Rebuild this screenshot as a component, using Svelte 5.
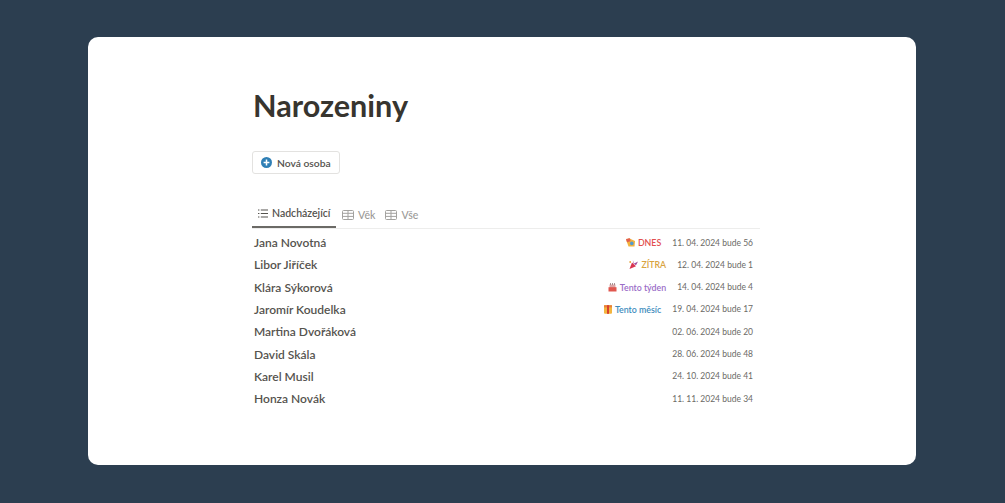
<script>
    const rows = [
        { name: "Jana Novotná", tag: "DNES", tone: "today", icon: "party", date: "11. 04. 2024 bude 56" },
        { name: "Libor Jiříček", tag: "ZÍTRA", tone: "tomorrow", icon: "popper", date: "12. 04. 2024 bude 1" },
        { name: "Klára Sýkorová", tag: "Tento týden", tone: "week", icon: "cake", date: "14. 04. 2024 bude 4" },
        { name: "Jaromír Koudelka", tag: "Tento měsíc", tone: "month", icon: "gift", date: "19. 04. 2024 bude 17" },
        { name: "Martina Dvořáková", date: "02. 06. 2024 bude 20" },
        { name: "David Skála", date: "28. 06. 2024 bude 48" },
        { name: "Karel Musil", date: "24. 10. 2024 bude 41" },
        { name: "Honza Novák", date: "11. 11. 2024 bude 34" }
    ];
</script>

{#snippet tableIcon()}
    <svg width="12" height="10" viewBox="0 0 12 10" fill="none">
        <rect x="0.5" y="0.5" width="11" height="9" rx="1" stroke="#a3a29f" stroke-width="1"/>
        <path d="M0.5 3.3H11.5M6 0.5V9.5M0.5 6.4H11.5" stroke="#a3a29f" stroke-width="1"/>
    </svg>
{/snippet}

<div class="page">
    <main class="card">
        <div class="content">
            <h1>Narozeniny</h1>

            <button class="new">
                <svg width="11" height="11" viewBox="0 0 11 11">
                    <circle cx="5.5" cy="5.5" r="5.5" fill="#2f7fb5"/>
                    <path d="M5.5 2.6V8.4M2.6 5.5H8.4" stroke="#fff" stroke-width="1.5"/>
                </svg>
                Nová osoba
            </button>

            <nav class="tabs">
                <span class="tab active">
                    <svg width="10" height="9" viewBox="0 0 10 9" fill="none" stroke="#55534e" stroke-width="1.1">
                        <path d="M0 1H1.4M2.8 1H10M0 4.5H1.4M2.8 4.5H10M0 8H1.4M2.8 8H10"/>
                    </svg>
                    Nadcházející
                </span>
                <span class="tab">{@render tableIcon()} Věk</span>
                <span class="tab">{@render tableIcon()} Vše</span>
            </nav>

            <ul>
                {#each rows as row}
                    <li>
                        <span class="name">{row.name}</span>
                        {#if row.tag}
                            <span class="tag {row.tone}">
                                {#if row.icon === "party"}
                                    <svg width="9" height="9" viewBox="0 0 9 9">
                                        <path d="M0 1.5L3 0.3L9 3L8.5 8.5H2.5Z" fill="#f2b33d"/>
                                        <path d="M0 1L4 0.3L4.5 3.2L1 4.2Z" fill="#e2604f"/>
                                        <circle cx="5.8" cy="5.4" r="1.8" fill="#4f9bd1"/>
                                    </svg>
                                {:else if row.icon === "popper"}
                                    <svg width="9" height="9" viewBox="0 0 9 9">
                                        <path d="M0.5 9L3 2.5L7 6.2Z" fill="#d9344f"/>
                                        <path d="M3.8 0L5.2 3.5L9 1.5L7 5.2L4.5 3.5Z" fill="#a14a9e"/>
                                        <circle cx="1.2" cy="2" r="0.9" fill="#e7a23b"/>
                                    </svg>
                                {:else if row.icon === "cake"}
                                    <svg width="9" height="9" viewBox="0 0 9 9">
                                        <path d="M1.5 1.5H7.5V5H1.5Z" fill="#dba6a6"/>
                                        <path d="M0.5 4.2H8.5V8.5H0.5Z" fill="#e0574f"/>
                                        <path d="M2.5 0V2M4.5 0V2M6.5 0V2" stroke="#8a6a6a" stroke-width="0.7"/>
                                    </svg>
                                {:else}
                                    <svg width="8" height="9" viewBox="0 0 8 9">
                                        <rect x="0" y="0.2" width="8" height="8.6" rx="1" fill="#f3b53f"/>
                                        <rect x="0" y="0.2" width="8" height="2.2" fill="#e8813a"/>
                                        <rect x="3" y="0.2" width="2" height="8.6" fill="#d8402f"/>
                                    </svg>
                                {/if}
                                {row.tag}
                            </span>
                        {/if}
                        <span class="date">{row.date}</span>
                    </li>
                {/each}
            </ul>
        </div>
    </main>
</div>

<style>
    :global(body) {
        margin: 0;
        background: #2c3e50;
    }

    .page {
        height: 503px;
        box-sizing: border-box;
        padding: 37px 89px 38px 88px;
        font-family: Lato, sans-serif;
    }

    .card {
        height: 100%;
        background: #fff;
        border-radius: 10px;
        box-sizing: border-box;
        padding: 49px 156px 0 164px;
    }

    .content {
        display: flex;
        flex-direction: column;
    }

    h1 {
        margin: 0 0 25px 1px;
        font-size: 30.6px;
        line-height: 40px;
        font-weight: 700;
        color: #37352f;
    }

    .new {
        align-self: flex-start;
        display: flex;
        align-items: center;
        gap: 5.5px;
        width: 88px;
        height: 23px;
        padding: 0 0 0 7.5px;
        box-sizing: border-box;
        background: #fff;
        border: 1px solid #e3e2e0;
        border-radius: 3px;
        font-family: inherit;
        font-size: 10.3px;
        font-weight: 600;
        color: #55534e;
        white-space: nowrap;
    }

    .tabs {
        display: flex;
        margin-top: 28px;
        border-bottom: 1px solid #ededec;
        height: 26px;
    }

    .tab {
        display: flex;
        align-items: center;
        gap: 4px;
        height: 26px;
        padding: 0 4px 0 0;
        margin-left: 6px;
        box-sizing: border-box;
        font-size: 10.5px;
        font-weight: 500;
        color: #9b9a97;
    }

    .tab.active {
        width: 84px;
        margin-left: 0;
        padding: 0 0 2px 6px;
        font-weight: 600;
        color: #55534e;
        border-bottom: 2px solid #6b6a66;
    }

    ul {
        list-style: none;
        margin: 2.4px 0 0;
        padding: 0;
    }

    li {
        display: flex;
        align-items: center;
        height: 22.3px;
        padding: 0 7px 0 2px;
        white-space: nowrap;
    }

    .name {
        flex: 1;
        font-size: 12px;
        font-weight: 600;
        color: #55534e;
    }

    .tag {
        display: flex;
        align-items: center;
        gap: 3px;
        margin-right: 11px;
        font-size: 8.8px;
        font-weight: 600;
    }

    .today { color: #e2504f; }
    .tomorrow { color: #d9a441; }
    .week { color: #9a6dc7; }
    .month { color: #3d8cbd; }

    .date {
        font-size: 8.5px;
        font-weight: 400;
        color: #6b6a66;
    }
</style>
